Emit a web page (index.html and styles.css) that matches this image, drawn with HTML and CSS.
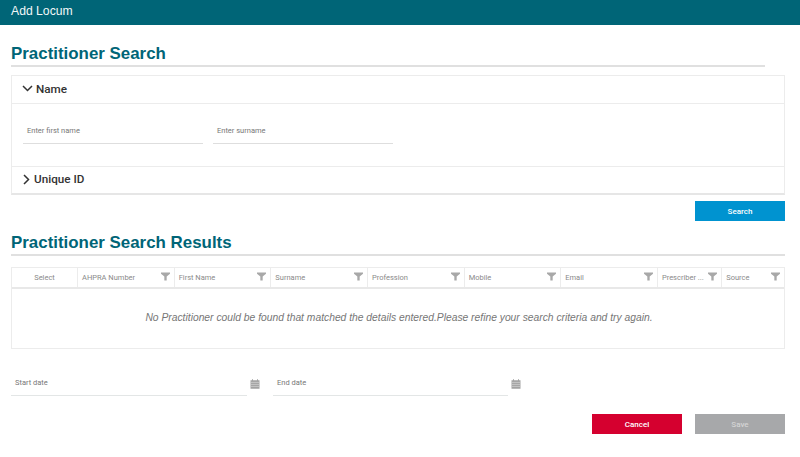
FILE: index.html
```html
<!DOCTYPE html>
<html lang="en">
<head>
<meta charset="utf-8">
<title>Add Locum</title>
<link rel="stylesheet" href="styles.css">
</head>
<body>
<svg class="defs" width="0" height="0" aria-hidden="true">
  <symbol id="funnel" viewBox="0 0 10 9"><path d="M0 0H10V1.4L6.3 4.6V9H3.7V4.6L0 1.4Z"/></symbol>
  <symbol id="cal" viewBox="0 0 10 10"><path d="M0.5 1.2H2V0.2H3V1.2H7V0.2H8V1.2H9.5V9.8H0.5Z"/><path class="cal-lines" d="M1 3.4H9M1 5.4H9M1 7.4H9" /></symbol>
</svg>
<header class="topbar">Add Locum</header>
<main class="page">
  <h2 class="section-title short">Practitioner Search</h2>
  <section class="panel">
    <div class="acc-head first">
      <svg class="chev" width="11" height="11" viewBox="0 0 11 11"><path d="M1 3l4.5 4.5L10 3"/></svg>
      <span class="acc-label">Name</span>
    </div>
    <div class="acc-body">
      <div class="field"><span>Enter first name</span></div>
      <div class="field"><span>Enter surname</span></div>
    </div>
    <div class="acc-head last">
      <svg class="chev" width="8" height="11" viewBox="0 0 8 11"><path d="M2 1l4.5 4.5L2 10"/></svg>
      <span class="acc-label">Unique ID</span>
    </div>
  </section>
  <div class="actions search-actions"><button class="btn blue">Search</button></div>
  <h2 class="section-title results">Practitioner Search Results</h2>
  <section class="grid">
    <div class="grid-head">
      <div class="col select">Select</div>
      <div class="col"><span>AHPRA Number</span><svg class="funnel"><use href="#funnel"/></svg></div>
      <div class="col"><span>First Name</span><svg class="funnel"><use href="#funnel"/></svg></div>
      <div class="col"><span>Surname</span><svg class="funnel"><use href="#funnel"/></svg></div>
      <div class="col"><span>Profession</span><svg class="funnel"><use href="#funnel"/></svg></div>
      <div class="col"><span>Mobile</span><svg class="funnel"><use href="#funnel"/></svg></div>
      <div class="col"><span>Email</span><svg class="funnel"><use href="#funnel"/></svg></div>
      <div class="col"><span>Prescriber ...</span><svg class="funnel"><use href="#funnel"/></svg></div>
      <div class="col"><span>Source</span><svg class="funnel"><use href="#funnel"/></svg></div>
    </div>
    <div class="grid-empty">No Practitioner could be found that matched the details entered.Please refine your search criteria and try again.</div>
  </section>
  <div class="dates">
    <div class="date"><div class="date-field">Start date</div><svg class="cal"><use href="#cal"/></svg></div>
    <div class="date"><div class="date-field end">End date</div><svg class="cal"><use href="#cal"/></svg></div>
  </div>
  <div class="actions footer-actions">
    <button class="btn red">Cancel</button>
    <button class="btn grey">Save</button>
  </div>
</main>
</body>
</html>
```
FILE: styles.css
```css
* { box-sizing: border-box; }
html, body { margin: 0; padding: 0; }
body {
  width: 800px;
  height: 457px;
  overflow: hidden;
  background: #fff;
  font-family: "Liberation Sans", Arial, sans-serif;
  color: #333;
}
.defs { position: absolute; }
.topbar {
  height: 25px;
  background: #006577;
  color: #f2f7f8;
  font-family: "Liberation Sans", Arial, sans-serif;
  font-size: 12.2px;
  line-height: 22px;
  padding-left: 11px;
}
.page { padding: 0 15px 0 11px; }
.section-title {
  margin: 0;
  color: #006577;
  font-size: 16.9px;
  font-weight: bold;
  line-height: 20px;
  border-bottom: 1px solid #e0e0e0;
}
.section-title.short {
  margin-top: 19px;
  height: 23px;
  margin-right: 20px;
  border-bottom-width: 2px;
}
.section-title.results {
  height: 25px;
  margin-top: 10px;
  padding-top: 2px;
  line-height: 20px;
  border-bottom-width: 2px;
}
.panel {
  margin-top: 8px;
  height: 120px;
  border: 1px solid #ececec;
  border-bottom: 2px solid #e6e6e6;
}
.acc-head {
  height: 28px;
  display: flex;
  align-items: center;
  padding-left: 10px;
  gap: 4px;
  border-bottom: 1px solid #ececec;
}
.acc-head.first { gap: 3px; padding-bottom: 2px; }
.acc-head.last { border-bottom: 0; height: 27px; padding-bottom: 3px; }
.chev { fill: none; stroke: #333; stroke-width: 1.5; }
.acc-label {
  font-family: Roboto, sans-serif;
  font-size: 11.7px;
  font-weight: 500;
  color: #333;
}
.acc-body {
  height: 63px;
  display: flex;
  gap: 10px;
  padding: 15px 0 0 11px;
  border-bottom: 1px solid #ececec;
}
.field {
  width: 180px;
  height: 25px;
  padding: 7px 0 0 4px;
  border-bottom: 1px solid #dedede;
  font-family: Roboto, sans-serif;
  font-size: 7.5px;
  line-height: 10px;
  color: #777;
}
.actions { display: flex; justify-content: flex-end; }
.btn {
  width: 90px;
  height: 20px;
  padding: 0;
  border: 0;
  font-family: Roboto, sans-serif;
  font-size: 8px;
  font-weight: 500;
  color: #fff;
}
.blue { background: #0093d0; }
.red { background: #d5002f; }
.grey { background: #a7a8aa; color: #d4d4d4; }
.search-actions { margin-top: 6px; }
.grid {
  margin-top: 11px;
  height: 82px;
  border: 1px solid #ececec;
}
.grid-head {
  height: 21px;
  display: grid;
  grid-template-columns: 65px repeat(6, 96.67px) 64.3px 1fr;
  border-bottom: 2px solid #e8e8e8;
}
.col {
  display: flex;
  align-items: center;
  justify-content: space-between;
  padding: 0 4px;
  border-left: 1px solid #ececec;
  font-family: Roboto, sans-serif;
  font-size: 7.5px;
  color: #8a8a8a;
  white-space: nowrap;
}
.col.select { justify-content: center; border-left: 0; }
.funnel { width: 9px; height: 9px; fill: #a8a8a8; flex: none; margin-bottom: 2px; }
.grid-empty {
  height: 59px;
  display: flex;
  align-items: center;
  justify-content: center;
  padding: 0 0 2px 2px;
  font-size: 10.3px;
  font-style: italic;
  color: #767676;
}
.dates { display: flex; gap: 26px; margin-top: 21px; }
.date { display: flex; width: 236px; height: 26px; }
.date-field {
  flex: none;
  width: 236px;
  height: 26px;
  padding: 7px 0 0 4px;
  border-bottom: 1px solid #e3e6e6;
  font-family: Roboto, sans-serif;
  font-size: 7.5px;
  line-height: 12px;
  color: #777;
}
.date-field.end { width: 235px; }
.cal { width: 10px; height: 10px; flex: none; margin: 9px 0 0 3px; fill: #a3a3a3; }
.cal-lines { stroke: #e8e8e8; stroke-width: 0.5; fill: none; }
.footer-actions { gap: 13px; margin-top: 18px; }
```
